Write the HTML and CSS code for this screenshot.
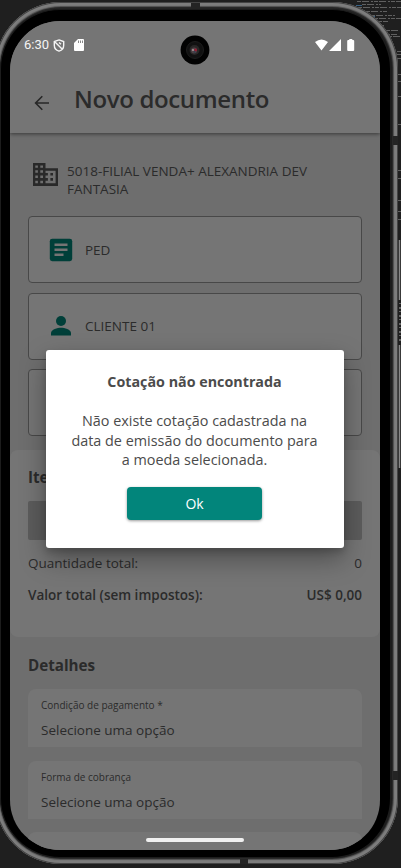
FILE: index.html
```
<!DOCTYPE html>
<html lang="pt-BR">
<head>
<meta charset="utf-8">
<title>Novo documento</title>
<link rel="stylesheet" href="styles.css">
</head>
<body>
<svg class="backdrop" width="401" height="868" viewBox="0 0 401 868" fill="none">
  <g stroke="#606060" stroke-width="1" stroke-dasharray="4 1 7 2 2 1">
    <path d="M357 1.500H401M362 4.500H381M358 7.500H401M366 11.500H388M371 15.500H395M374 18.500H401M378 21.500H388M381 25.500H384M386 30.500H400M386 34.500H397M388 36.500H401M397 51.500H401M397 54.500H401M397 58.500H401M398 74.500H401M398 81.500H401M398 96.500H401M398 124.500H401M398 170.500H401M398 178.500H401M398 200.500H401M398 211.500H401M398 219.500H401"/>
  </g>
  <path d="M356 5.500H362M372 16.500H375" stroke="#386184"/>
  <path d="M399.500 240V300M399.500 345V468" stroke="#888" stroke-width="1.500"/>
  <path d="M400 303V342" stroke="#666" stroke-width="2" stroke-dasharray="1 3 2 2"/>
</svg>
<div class="phone">
  <i class="seam seam-top"></i><i class="seam seam-bottom"></i><i class="seam seam-right-a"></i><i class="seam seam-right-b"></i>
  <div class="bezel">
    <main class="screen">
      <header class="header">
        <div class="status">
          <span class="clock">6:30</span>
          <svg class="shield" width="12" height="13" viewBox="0 0 12 13" fill="none" stroke="#f5f5f5" stroke-width="1.400"><path d="M6 .9 10.700 2.600V6.200C10.700 9.100 8.700 11.300 6 12.100 3.300 11.300 1.300 9.100 1.300 6.200V2.600ZM2 3 9.300 10.200M6 3.500 8 5.300"/></svg>
          <svg class="sd" width="10" height="12" viewBox="0 0 10 12"><path fill="#fff" d="M4 0H9Q10 0 10 1V11Q10 12 9 12H1Q0 12 0 11V4Z"/><path stroke="#888" d="M4.500 1.500V4M6.500 1.500V4M8.500 1.500V4"/></svg>
          <svg class="signals" width="41" height="13" viewBox="0 0 41 13" fill="#fff"><path d="M0 3Q6.500-2 13 3L6.500 11.500ZM26 0V12H14ZM34.300 1V0H37.300V1H38.200Q39.200 1 39.200 2V11Q39.200 12 38.200 12H33.200Q32.200 12 32.200 11V2Q32.200 1 33.200 1Z"/></svg>
        </div>
        <div class="titlebar">
          <svg width="16" height="16" viewBox="0 0 16 16" fill="none" stroke="#272727" stroke-width="1.600"><path d="M15 8H2M8.300 1.300 1.600 8 8.300 14.700"/></svg>
          <h1>Novo documento</h1>
        </div>
      </header>
      <section class="company">
        <svg width="25" height="23" viewBox="0 0 24 22" fill="#292929"><path fill-rule="evenodd" d="M0 0H12V5H24V22H0ZM2.200 2.300V4.500H4.700V2.300ZM7 2.300V4.500H9.600V2.300ZM2.200 7V9.300H4.700V7ZM7 7V9.300H9.600V7ZM2.200 12V14.300H4.700V12ZM7 12V14.300H9.600V12ZM2.200 17V19.500H4.700V17ZM7 17V19.500H9.600V17ZM12 7.300V9.500H14.300V12H12V14.300H14.300V17H12V19.500H21.700V7.300ZM16.700 9.500H19.200V12H16.700ZM16.700 14.300H19.200V17H16.700Z"/></svg>
        <p><span class="line">5018-FILIAL VENDA+ ALEXANDRIA DEV</span><span class="line">FANTASIA</span></p>
      </section>
      <section class="choices">
        <div class="choice"><svg width="24" height="24" viewBox="0 0 24 24"><rect x=".8" y=".8" width="22.400" height="22.400" rx="2.400" fill="#003f39"/><path d="M5.500 6.800H18.500M5.500 11.800H18.500M5.500 16.800H14.500" stroke="#747474" stroke-width="2.500"/></svg><span>PED</span></div>
        <div class="choice"><svg width="24" height="24" viewBox="0 0 24 24" fill="#003f39"><circle cx="12" cy="7" r="5"/><path d="M2 21.500V19C2 15.700 8.600 13.800 12 13.800S22 15.700 22 19V21.500Z"/></svg><span>CLIENTE 01</span></div>
        <div class="choice"></div>
      </section>
      <section class="items">
        <h2>Itens</h2>
        <div class="add"></div>
        <div class="total"><span>Quantidade total:</span><span>0</span></div>
        <div class="total strong"><span>Valor total (sem impostos):</span><span>US$ 0,00</span></div>
      </section>
      <section class="details">
        <h2>Detalhes</h2>
        <div class="field"><label>Condição de pagamento *</label><span class="pick">Selecione uma opção</span></div>
        <div class="field"><label>Forma de cobrança</label><span class="pick">Selecione uma opção</span></div>
        <div class="field"></div>
      </section>
    </main>
  </div>
</div>
<svg class="camera" width="30" height="30" viewBox="0 0 30 30"><circle cx="15" cy="15" r="14.400" fill="#020202"/><circle cx="15" cy="15" r="8.500" fill="#111" stroke="#1c1c1c"/><circle cx="14.500" cy="15" r="5" fill="#292727"/><circle cx="14" cy="15.500" r="3" fill="#504447"/><circle cx="13" cy="15" r="1.100" fill="#a5979a"/><circle cx="15.700" cy="15" r="1.400" fill="#941d34"/><circle cx="14.500" cy="17" r="1" fill="#353f52"/></svg>
<div class="dialog" role="dialog">
  <h3>Cotação não encontrada</h3>
  <p><span class="line">Não existe cotação cadastrada na</span><span class="line">data de emissão do documento para</span><span class="line">a moeda selecionada.</span></p>
  <button>Ok</button>
</div>
<div class="homebar"></div>
</body>
</html>
```
FILE: styles.css
```
* { box-sizing: border-box; }
body { margin: 0; width: 401px; height: 868px; overflow: hidden; position: relative; background: #1f1f1f; font-family: "Open Sans", "Noto Sans", sans-serif; color: #2b2b2b; }
h1, h2, h3, p { margin: 0; }
span { white-space: nowrap; }
.line { display: block; }
.backdrop { position: absolute; left: 0; top: 0; }
.phone { position: absolute; left: -5px; top: 2px; width: 403px; height: 862px; border-radius: 66px; background: #252525; box-shadow: inset 0 0 0 1px #444, inset 0 0 1px 4px #7d7d7d, inset 0 0 1px 5px #555; padding: 7px 6px 6px 5px; }
.seam { position: absolute; background: #242424; }
.seam-top { left: 196px; top: 1px; width: 9px; height: 6px; }
.seam-bottom { left: 245px; bottom: 0; width: 8px; height: 5px; }
.seam-right-a { right: 0; top: 134px; width: 5px; height: 9px; }
.seam-right-b { right: 0; top: 769px; width: 5px; height: 9px; }
.bezel { width: 392px; height: 849px; background: #000; border-radius: 60px; border: 1px solid #1c1c1c; border-right-width: 2px; padding: 11px 0 0 9px; }
.screen { width: 370px; height: 829px; overflow: hidden; border-radius: 50px; background: #6e6e6e; }
.header { position: relative; height: 112px; background: #757575; box-shadow: 0 1px 4px rgba(0,0,0,.5); }
.status { display: flex; height: 46px; padding: 2px 24px 0 14px; align-items: center; }
.clock { color: #f4f4f4; font: 13px/16px Roboto, sans-serif; width: 25px; }
.shield { margin-left: 4px; }
.sd { margin-left: 9px; }
.signals { margin-left: auto; }
.titlebar { display: flex; align-items: center; height: 66px; padding: 0 24px; gap: 24px; }
.titlebar svg { margin-top: 6px; }
h1 { font-size: 24px; letter-spacing: -.35px; font-weight: 600; line-height: 34px; margin-top: -3px; }
.company { height: 83px; padding: 29px 23px 0; display: flex; gap: 9px; }
.company svg { margin-top: 1px; }
.company p { font-size: 13.500px; line-height: 18px; }
.choices { padding: 0 18px; display: flex; flex-direction: column; gap: 9.500px; }
.choice { height: 67px; border: 1px solid #484848; border-radius: 4px; background: #757575; display: flex; align-items: center; gap: 12px; padding-left: 20px; font-size: 13.500px; }
.items { height: 187px; margin-top: 14px; border-radius: 8px; padding: 18px 18px 0; background: #757575; }
h2 { font-size: 15.200px; line-height: 20px; font-weight: 700; }
.items h2 { position: relative; top: -1px; }
.add { height: 39px; margin-top: 13px; background: #5c5c5c; border-radius: 2px; }
.total { display: flex; justify-content: space-between; font-size: 13.500px; line-height: 20px; margin-top: 13px; }
.strong { font-weight: 600; margin-top: 12px; }
.details { padding: 18px 18px 0; }
.field { height: 58px; background: #757575; border-radius: 8px 8px 0 0; margin: 0 0 13.500px; padding: 8px 13px; }
.details h2 { margin-bottom: 14px; }
.field label { display: block; font-size: 10px; line-height: 16px; }
.pick { display: block; font-size: 13.500px; line-height: 20px; margin-top: 7px; }
.camera { position: absolute; left: 180px; top: 35px; }
.dialog { position: absolute; left: 45.500px; top: 350px; width: 298px; height: 198px; background: #fff; border-radius: 3px; box-shadow: 0 11px 26px rgba(0,0,0,.35), 0 4px 6px rgba(0,0,0,.15); text-align: center; color: #4b4b4b; padding-top: 22px; }
.dialog h3 { font-size: 14.300px; line-height: 20px; font-weight: 700; }
.dialog p { margin: 19px 0 17px; font-size: 14.400px; line-height: 19.700px; }
button { display: block; width: 135px; height: 33px; margin: auto; border: 0; border-radius: 4px; background: #02857b; color: #fff; font: 14px "Open Sans", sans-serif; box-shadow: 0 1px 3px rgba(0,0,0,.4); }
.homebar { position: absolute; left: 146px; top: 838px; width: 98px; height: 4px; border-radius: 2px; background: #f0f0f0; }
```
